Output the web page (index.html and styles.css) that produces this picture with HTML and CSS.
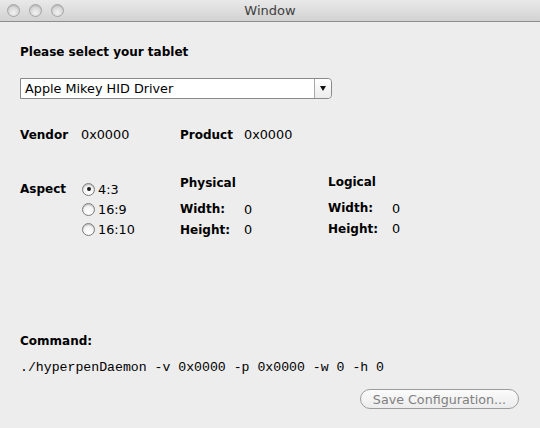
FILE: index.html
```html
<!DOCTYPE html>
<html>
<head>
<meta charset="utf-8">
<link rel="stylesheet" href="styles.css">
</head>
<body>
<div class="window">
  <div class="titlebar">
    <div class="lights">
      <span class="light"></span><span class="light"></span><span class="light"></span>
    </div>
    <div class="title">Window</div>
  </div>
  <div class="content">
    <div class="bold heading">Please select your tablet</div>
    <div class="select">
      <span class="select-text">Apple Mikey HID Driver</span>
      <span class="select-btn"><span class="arrow"></span></span>
    </div>
    <div class="ids">
      <span class="bold">Vendor</span><span>0x0000</span>
      <span class="bold">Product</span><span>0x0000</span>
    </div>
    <div class="aspect">
      <span class="bold a-label">Aspect</span>
      <div class="radios">
        <label class="radio"><span class="dot checked"></span>4:3</label>
        <label class="radio"><span class="dot"></span>16:9</label>
        <label class="radio"><span class="dot"></span>16:10</label>
      </div>
      <div class="dims">
        <span class="bold dims-head">Physical</span>
        <span class="bold">Width:</span><span>0</span>
        <span class="bold">Height:</span><span>0</span>
      </div>
      <div class="dims logical">
        <span class="bold dims-head">Logical</span>
        <span class="bold">Width:</span><span>0</span>
        <span class="bold">Height:</span><span>0</span>
      </div>
    </div>
    <div class="bold command">Command:</div>
    <div class="code">./hyperpenDaemon -v 0x0000 -p 0x0000 -w 0 -h 0</div>
    <div class="actions">
      <button class="btn">Save Configuration...</button>
    </div>
  </div>
</div>
</body>
</html>
```
FILE: styles.css
```css
html, body {
  margin: 0;
  padding: 0;
}
body {
  width: 540px;
  height: 428px;
  overflow: hidden;
  background: #ededed;
  font-family: "DejaVu Sans", "Liberation Sans", sans-serif;
  font-size: 12.8px;
  color: #000;
}
.window {
  width: 540px;
  height: 428px;
  background: #ededed;
}
.titlebar {
  height: 21px;
  border-bottom: 1px solid #8e8e8e;
  background: linear-gradient(#e9e9e9, #d2d2d2);
  display: flex;
  align-items: center;
  position: relative;
}
.lights {
  display: flex;
  gap: 9px;
  padding-left: 7px;
}
.light {
  width: 11px;
  height: 11px;
  border-radius: 50%;
  border: 1px solid #a5a5a5;
  background: radial-gradient(circle at 50% 70%, #f2f2f2 0%, #d6d6d6 60%, #c4c4c4 100%);
  box-shadow: inset 0 1px 1px rgba(0,0,0,0.12);
}
.title {
  position: absolute;
  left: 0;
  right: 0;
  text-align: center;
  font-size: 13px;
  color: #404040;
  line-height: 21px;
}
.content {
  padding: 0 20px;
}
.bold {
  font-weight: bold;
  font-size: 12px;
}
.heading {
  margin-top: 22px;
  line-height: 16px;
}
.select {
  margin-top: 18px;
  width: 310px;
  height: 19px;
  border: 1px solid #8a8a8a;
  border-radius: 0 4px 4px 0;
  background: #fff;
  display: flex;
  align-items: center;
}
.select-text {
  flex: 1;
  padding-left: 4px;
  font-size: 12.8px;
}
.select-btn {
  width: 16px;
  height: 19px;
  border-left: 1px solid #a8a8a8;
  border-radius: 0 4px 4px 0;
  background: linear-gradient(#ffffff, #ececec);
  display: flex;
  align-items: center;
  justify-content: center;
}
.arrow {
  width: 0;
  height: 0;
  border-left: 3px solid transparent;
  border-right: 3px solid transparent;
  border-top: 5px solid #111;
}
.ids {
  margin-top: 28px;
  display: grid;
  grid-template-columns: 61px 99px 64px auto;
  line-height: 16px;
  align-items: center;
}
.aspect {
  margin-top: 36px;
  display: grid;
  grid-template-columns: 62px 98px 148px auto;
  align-items: start;
}
.a-label {
  line-height: 20px;
}
.radios {
  display: flex;
  flex-direction: column;
}
.radio {
  display: flex;
  align-items: center;
  height: 20px;
  gap: 3px;
}
.dot {
  width: 11px;
  height: 11px;
  border-radius: 50%;
  border: 1px solid #7c7c7c;
  background: radial-gradient(circle at 50% 75%, #ffffff 0%, #f4f4f4 50%, #dcdcdc 100%);
  box-shadow: inset 0 1px 1px rgba(0,0,0,0.18);
  display: flex;
  align-items: center;
  justify-content: center;
}
.dot.checked::after {
  content: "";
  width: 4px;
  height: 4px;
  border-radius: 50%;
  background: #1a1a1a;
}
.dims {
  display: grid;
  grid-template-columns: 64px auto;
  grid-template-rows: 23px 20px 21px;
  align-items: center;
  margin-top: -3px;
}
.dims.logical {
  margin-top: -4px;
}
.dims-head {
  grid-column: 1 / 3;
  line-height: 15px;
  align-self: start;
}
.command {
  margin-top: 93px;
  line-height: 16px;
}
.code {
  margin-top: 11px;
  font-family: "Liberation Mono", "Courier New", monospace;
  font-size: 13.2px;
  line-height: 16px;
}
.actions {
  display: flex;
  justify-content: flex-end;
  margin-top: 13px;
  padding-right: 1px;
}
.btn {
  width: 159px;
  height: 20px;
  border: 1px solid #9d9d9d;
  border-radius: 10px;
  background: linear-gradient(#fbfbfb, #ececec);
  font-family: "DejaVu Sans", "Liberation Sans", sans-serif;
  font-size: 12.7px;
  color: #808080;
  padding: 0;
}
```
